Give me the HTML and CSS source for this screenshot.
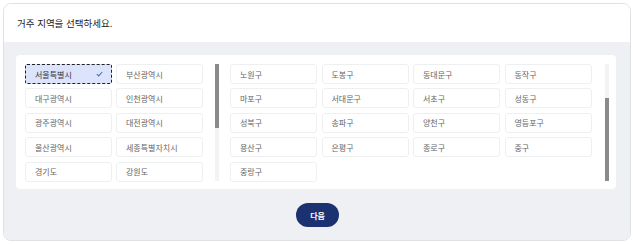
FILE: index.html
```html
<!DOCTYPE html>
<html lang="ko">
<head>
  <meta charset="UTF-8" />
  <title>거주 지역 선택</title>
  <link rel="stylesheet" href="styles.css">
</head>
<body>

  <div class="card">
    <div class="card-header">거주 지역을 선택하세요.</div>

    <div class="card-body">
      <div class="panel">

        <!-- 시/도 -->
        <div class="list list-city">
          <div class="item selected">서울특별시
            <svg class="check" width="7" height="6" viewBox="0 0 7 6"><path d="M0.8 3.2 L2.7 4.9 L6.2 1" fill="none" stroke="#4a6ad0" stroke-width="1.1"/></svg>
          </div>
          <div class="item">부산광역시</div>
          <div class="item">대구광역시</div>
          <div class="item">인천광역시</div>
          <div class="item">광주광역시</div>
          <div class="item">대전광역시</div>
          <div class="item">울산광역시</div>
          <div class="item">세종특별자치시</div>
          <div class="item">경기도</div>
          <div class="item">강원도</div>
        </div>
        <div class="scrollbar bar-left"><div class="thumb thumb-left"></div></div>

        <!-- 구 -->
        <div class="list list-gu">
          <div class="item">노원구</div>
          <div class="item">도봉구</div>
          <div class="item">동대문구</div>
          <div class="item">동작구</div>
          <div class="item">마포구</div>
          <div class="item">서대문구</div>
          <div class="item">서초구</div>
          <div class="item">성동구</div>
          <div class="item">성북구</div>
          <div class="item">송파구</div>
          <div class="item">양천구</div>
          <div class="item">영등포구</div>
          <div class="item">용산구</div>
          <div class="item">은평구</div>
          <div class="item">종로구</div>
          <div class="item">중구</div>
          <div class="item">중랑구</div>
        </div>
        <div class="scrollbar bar-right"><div class="thumb thumb-right"></div></div>

      </div>

      <div class="actions">
        <button class="next">다음</button>
      </div>
    </div>
  </div>

</body>
</html>
```

FILE: styles.css
```css
* {
  box-sizing: border-box;
}
html, body {
  margin: 0;
  padding: 0;
  background: #ffffff;
  font-family: "Noto Sans CJK KR", "Noto Sans", sans-serif;
  color: #333;
}
body {
  padding: 3px 2px 3px 3px;
}
.card {
  width: 628px;
  height: 238px;
  border: 1px solid #dfe1e6;
  border-radius: 8px;
  overflow: hidden;
  display: flex;
  flex-direction: column;
}
.card-header {
  height: 38px;
  padding-left: 13px;
  display: flex;
  align-items: center;
  font-size: 9.5px;
  color: #222;
  background: #fff;
}
.card-body {
  flex: 1;
  background: #eff0f4;
  padding: 13px 14px 0 12px;
}
.panel {
  height: 134px;
  background: #fff;
  border-radius: 4px;
  padding: 9px 7px 8px 9px;
  display: flex;
  align-items: flex-start;
}
.list {
  display: grid;
  grid-auto-rows: 20px;
  row-gap: 4.4px;
}
.list-city {
  grid-template-columns: repeat(2, 87px);
  column-gap: 4px;
}
.list-gu {
  grid-template-columns: repeat(4, 87px);
  column-gap: 4.5px;
  margin-left: 11px;
}
.item {
  border: 1px solid #eeeff1;
  border-radius: 3px;
  padding-left: 9px;
  font-size: 8px;
  color: #666;
  display: flex;
  align-items: center;
  justify-content: space-between;
  padding-right: 8px;
}
.item.selected {
  background: #dbe4fa;
  border: 1px dashed #222;
  border-radius: 2px;
  color: #334;
}
.check {
  display: block;
}
.scrollbar {
  width: 4px;
  height: 117px;
  background: #f3f3f3;
  display: flex;
  flex-direction: column;
}
.bar-left {
  margin-left: 12px;
}
.bar-right {
  margin-left: 13px;
  justify-content: flex-end;
}
.thumb {
  background: #8a8a8a;
  width: 100%;
}
.thumb-left {
  height: 64px;
}
.thumb-right {
  height: 83px;
}
.actions {
  display: flex;
  justify-content: center;
  padding-top: 14px;
  padding-left: 3px;
}
.next {
  width: 43px;
  height: 24px;
  border: none;
  border-radius: 12px;
  background: #1b3170;
  color: #fff;
  font-family: "Noto Sans CJK KR", "Noto Sans", sans-serif;
  font-weight: bold;
  font-size: 8px;
  cursor: pointer;
}
```
